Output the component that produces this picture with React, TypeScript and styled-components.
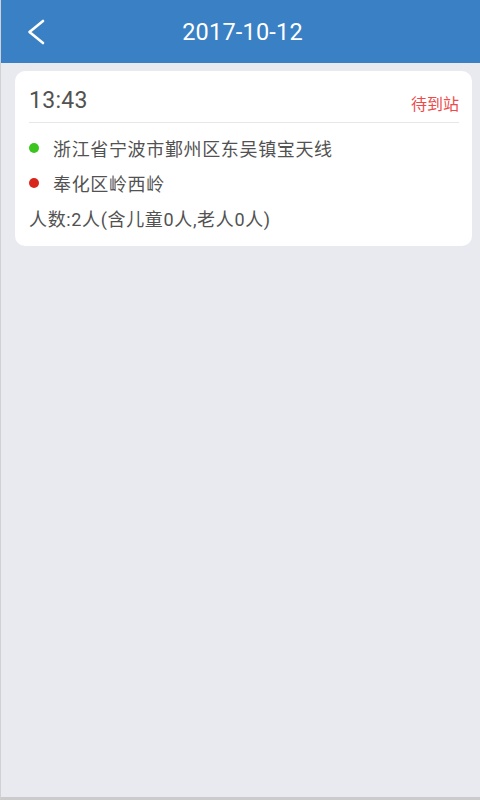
import React from "react";
import styled, { createGlobalStyle } from "styled-components";

const Global = createGlobalStyle`
  html, body { margin: 0; padding: 0; }
  body {
    font-family: Roboto, "Noto Sans CJK SC", "Noto Sans", sans-serif;
  }
  * { box-sizing: border-box; }
`;

const Screen = styled.div`
  width: 480px;
  height: 800px;
  background: #e8eaef;
  border-left: 1px solid #cfd1d4;
  border-bottom: 3px solid #cbcbcb;
  display: flex;
  flex-direction: column;
`;

const Header = styled.header`
  height: 63px;
  flex: none;
  background: #3a80c4;
  display: grid;
  grid-template-columns: 64px 1fr 64px;
  align-items: center;
`;

const BackButton = styled.button`
  border: 0;
  background: none;
  padding: 0 0 0 26px;
  height: 63px;
  display: flex;
  align-items: center;
  cursor: pointer;
`;

const Title = styled.h1`
  margin: 0;
  text-align: center;
  color: #ffffff;
  font-family: Roboto, "Noto Sans CJK SC", sans-serif;
  font-size: 23.5px;
  font-weight: 400;
  padding-left: 4px;
  letter-spacing: 0.2px;
`;

const Content = styled.main`
  padding: 8px 8px 0 14px;
`;

const Card = styled.section`
  background: #ffffff;
  border-radius: 10px;
  padding: 0 13px 11px 14px;
`;

const TopRow = styled.div`
  height: 52px;
  display: flex;
  align-items: center;
  justify-content: space-between;
  border-bottom: 1px solid #e6e7ea;
  padding-top: 8px;
`;

const Time = styled.span`
  font-family: Roboto, sans-serif;
  font-size: 23px;
  color: #525252;
  letter-spacing: 0.3px;
`;

const Status = styled.span`
  font-family: "Noto Sans CJK SC", sans-serif;
  font-size: 16px;
  color: #ef4a4a;
  padding-top: 4px;
`;

const List = styled.div`
  padding-top: 7px;
  display: flex;
  flex-direction: column;
`;

const Line = styled.div`
  height: 35px;
  display: flex;
  align-items: center;
  font-family: Roboto, "Noto Sans CJK SC", sans-serif;
  font-size: 18px;
  letter-spacing: 0.65px;
  color: #525252;
`;

const Place = styled.span`
  font-family: "Noto Sans CJK SC", sans-serif;
  font-size: 18px;
  letter-spacing: 0.65px;
  color: #525252;
`;

const Dot = styled.span<{ $color: string }>`
  width: 10px;
  height: 10px;
  border-radius: 50%;
  background: ${(p) => p.$color};
  margin: 0 14px 0 0;
  flex: none;
`;

export default function App() {
  return (
    <>
      <Global />
      <Screen lang="zh-CN">
        <Header>
          <BackButton aria-label="back">
            <svg width="18" height="26" viewBox="0 0 18 26">
              <polyline
                points="16,2 2.5,13 16,24"
                fill="none"
                stroke="#ffffff"
                strokeWidth="2.6"
                strokeLinecap="round"
                strokeLinejoin="round"
              />
            </svg>
          </BackButton>
          <Title>2017-10-12</Title>
          <span />
        </Header>
        <Content>
          <Card>
            <TopRow>
              <Time>13:43</Time>
              <Status>待到站</Status>
            </TopRow>
            <List>
              <Line>
                <Dot $color="#3cc51f" />
                <Place>浙江省宁波市鄞州区东吴镇宝天线</Place>
              </Line>
              <Line>
                <Dot $color="#d9261c" />
                <Place>奉化区岭西岭</Place>
              </Line>
              <Line>人数:2人(含儿童0人,老人0人)</Line>
            </List>
          </Card>
        </Content>
      </Screen>
    </>
  );
}
